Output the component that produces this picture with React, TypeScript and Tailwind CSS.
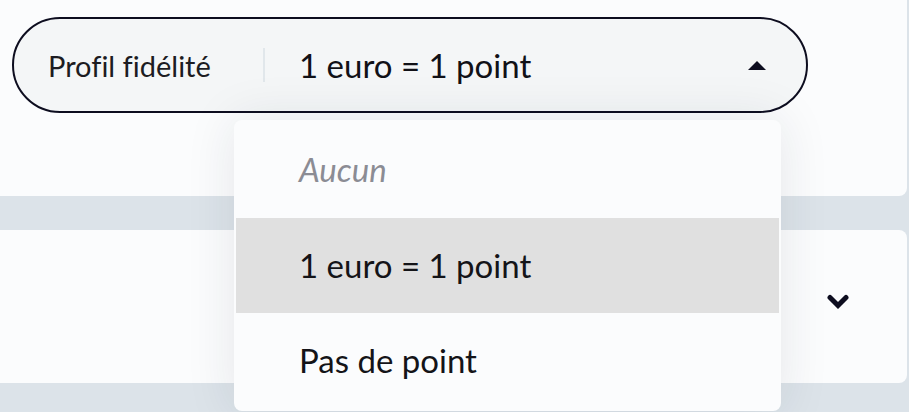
import React from "react";

export default function App() {
  return (
    <div
      className="relative h-[412px] w-[909px] overflow-hidden bg-[#dce3e9] [font-variant-ligatures:none]"
      style={{ fontFamily: "Lato, 'Noto Sans', sans-serif" }}
    >
      {/* Top card */}
      <div className="h-[196px] w-[907px] rounded-br-lg bg-[#fbfcfd] pl-[12px] pt-[17px]">
        <div className="flex h-[96px] w-[796px] items-center rounded-full border-2 border-[#0d0d1f] bg-[#f4f6f7] pl-[34px] pr-[40px]">
          <span className="w-[215px] text-[29px] leading-none text-[#1c1c22]">Profil fidélité</span>
          <div className="h-[34px] w-[2px] bg-[#e1e7eb]" />
          <span className="ml-[34px] text-[33px] leading-none text-[#111117]">1 euro = 1 point</span>
          <div className="ml-auto h-0 w-0 border-x-[9px] border-b-[9px] border-x-transparent border-b-[#0d0d1f]" />
        </div>
      </div>
      {/* Second card */}
      <div className="mt-[34px] flex h-[153px] w-[907px] items-center justify-end rounded-r-lg bg-[#fbfcfd] pr-[58px]">
        <svg className="mb-[9px]" width="22" height="16" viewBox="0 0 22 16">
          <polyline points="3,3.5 11,11.5 19,3.5" fill="none" stroke="#0d0d1f" strokeWidth="5" strokeLinecap="round" strokeLinejoin="miter" />
        </svg>
      </div>
      {/* Third card */}
      <div className="mt-[29px] h-[100px] w-[907px] rounded-tr-lg bg-[#fbfcfd]" />

      {/* Dropdown */}
      <div className="absolute left-[234px] top-[120px] w-[547px] overflow-hidden rounded-lg bg-[#fbfcfd] py-[2px] shadow-[0_0_50px_rgba(30,40,60,0.10)]">
        <div className="flex h-[96px] items-center pl-[65px] text-[33px] italic text-[#8b8c94]">Aucun</div>
        <div className="mx-[2px] flex h-[95px] items-center bg-[#e0e0e0] pl-[63px] text-[33px] text-[#141418]">1 euro = 1 point</div>
        <div className="flex h-[96px] items-center pl-[65px] text-[33px] text-[#141418]">Pas de point</div>
      </div>
    </div>
  );
}
